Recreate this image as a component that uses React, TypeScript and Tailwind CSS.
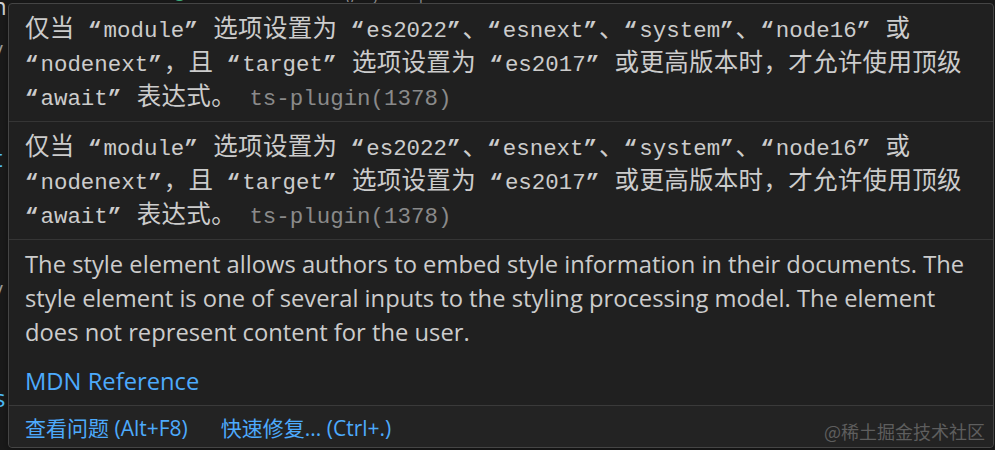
import React from "react";

const CJK_RE = /([\u3000-\u303f\u4e00-\u9fff\uff00-\uffef]+|[“”])/;

const diagLines = [
  "仅当 “module” 选项设置为 “es2022”、“esnext”、“system”、“node16” 或",
  "“nodenext”，且 “target” 选项设置为 “es2017” 或更高版本时，才允许使用顶级",
  "“await” 表达式。",
];

const docLines = [
  "The style element allows authors to embed style information in their documents. The",
  "style element is one of several inputs to the styling processing model. The element",
  "does not represent content for the user.",
];

function MonoText({ text }: { text: string }) {
  const parts = text.split(CJK_RE).filter(Boolean);
  return (
    <>
      {parts.map((p, i) => {
        if (p === "“" || p === "”")
          return (
            <span key={i} className="tracking-[2px] font-bold">
              {p}
            </span>
          );
        if (/[\u3000-\u9fff\uff00-\uffef]/.test(p))
          return (
            <span key={i} className="font-['Noto_Sans_CJK_SC',sans-serif] text-[24.5px] leading-[20px] tracking-[0.3px]">
              {p}
            </span>
          );
        return <span key={i}>{p}</span>;
      })}
    </>
  );
}

function Diagnostic() {
  return (
    <div className="px-[16px] pt-[10px] pb-[5px] font-['Liberation_Mono','Noto_Sans_CJK_SC',monospace] text-[22.45px] leading-[34px] text-[#cccccc] whitespace-pre">
      {diagLines.map((l, i) => (
        <div key={i} className="h-[34px]">
          <MonoText text={l} />
          {i === diagLines.length - 1 && (
            <span className="text-[#8a8a8a]"> ts-plugin(1378)</span>
          )}
        </div>
      ))}
    </div>
  );
}

export default function App() {
  return (
    <div className="relative w-[995px] h-[450px] overflow-hidden bg-[#1a1a1a] font-['Open_Sans','Noto_Sans_CJK_SC',sans-serif]">
      {/* editor behind the hover */}
      <div className="absolute -top-[17px] left-[40px] flex gap-4 text-[15px] text-[#9a9a9a] whitespace-nowrap">
        <span>src</span>
        <span>›</span>
        <span>views</span>
        <span>›</span>
        <span className="text-[#41b883]">●</span>
        <span>AboutView.vue</span>
        <span>›</span>
        <span>⟨⟩ style scoped</span>
      </div>
      <span className="absolute -left-[8px] -top-[12px] text-[24px] text-[#d4d4d4]">n</span>
      <span className="absolute -left-[5px] top-[36px] text-[22px] text-[#9a9a9a]">/</span>
      <span className="absolute -left-[6px] top-[140px] text-[24px] text-[#4fc1ff]">t</span>
      <span className="absolute -left-[5px] top-[276px] text-[22px] text-[#9a9a9a]">/</span>
      <span className="absolute -left-[6px] top-[380px] text-[24px] text-[#4fc1ff]">s</span>

      {/* hover widget */}
      <div className="absolute left-[8px] top-[3px] w-[986px] h-[445px] flex flex-col rounded-[4px] border border-[#454545] bg-[#202020] shadow-[0_2px_8px_rgba(0,0,0,0.36)]">
        <Diagnostic />
        <div className="h-px bg-[#353535]" />
        <Diagnostic />
        <div className="h-px bg-[#353535]" />

        <div className="flex-1 px-[16px] pt-[7px] text-[23.75px] leading-[34px] text-[#cccccc] whitespace-nowrap">
          {docLines.map((l) => (
            <div key={l}>{l}</div>
          ))}
          <div className="mt-[15px] text-[#4daafc]">MDN Reference</div>
        </div>

        <div className="relative flex items-center gap-[33px] h-[42px] px-[16px] pt-[4px] border-t border-[#3a3a3a] bg-[#232323] rounded-b-[4px] text-[21px] text-[#4daafc] whitespace-nowrap">
          <span>查看问题 (Alt+F8)</span>
          <span>快速修复... (Ctrl+.)</span>
          <span className="absolute right-[8px] top-[13px] text-[18px] leading-[24px] text-[#5e5e5e] font-['Noto_Sans_CJK_SC',sans-serif]">
            @稀土掘金技术社区
          </span>
        </div>
      </div>
    </div>
  );
}
